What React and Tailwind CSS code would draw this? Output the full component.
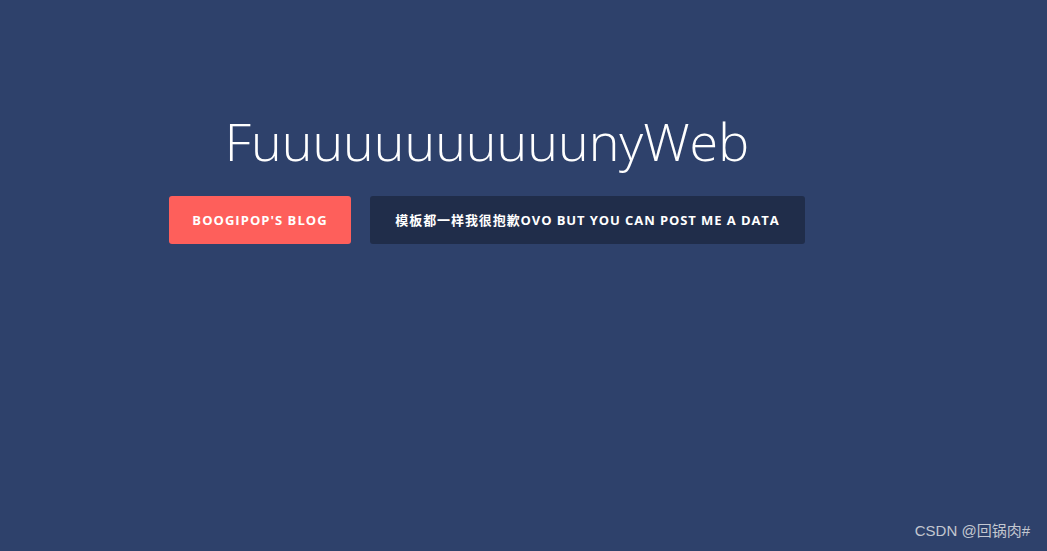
export default function App() {
  return (
    <main
      className="relative flex min-h-[551px] w-full flex-col bg-[#2e416b]"
      style={{ fontFamily: '"Open Sans", "Noto Sans CJK SC", sans-serif' }}
    >
      <section className="flex w-[974px] flex-col items-center pt-[105px]">
        <h1 className="text-[52px] font-light leading-[72px] text-white">
          FuuuuuuuuuuunyWeb
        </h1>
        <div className="mt-[19px] flex gap-[19px]">
          <a className="flex h-12 w-[182px] items-center justify-center rounded-[3px] bg-[#fe5f5b] pt-[2px] text-[13px] font-bold uppercase tracking-[0.08em] text-white">
            Boogipop's Blog
          </a>
          <a className="flex h-12 w-[435px] items-center justify-center rounded-[3px] bg-[#202d4a] pt-[2px] text-[13px] font-bold uppercase tracking-[0.07em] text-white">
            模板都一样我很抱歉OvO but you can post me a data
          </a>
        </div>
      </section>
      <span
        className="absolute bottom-[9px] right-[17px] text-[15px] text-[#c3c7d0]"
        style={{ fontFamily: '"Liberation Sans", "Noto Sans CJK SC", sans-serif' }}
      >
        CSDN @回锅肉#
      </span>
    </main>
  );
}
